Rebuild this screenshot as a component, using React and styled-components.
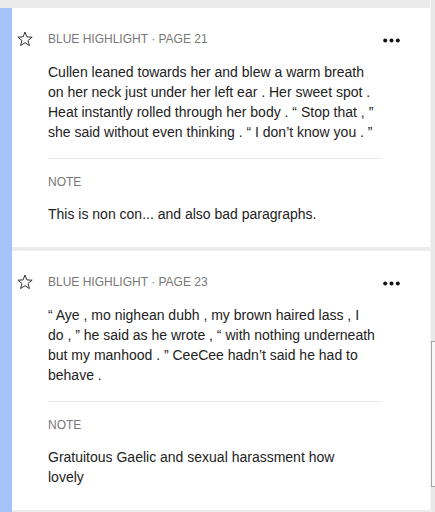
import React from 'react'
import styled, { createGlobalStyle } from 'styled-components'

const highlights = [
    {
        page: 21,
        text: 'Cullen leaned towards her and blew a warm breath on her neck just under her left ear . Her sweet spot . Heat instantly rolled through her body . \u201C Stop that , \u201D she said without even thinking . \u201C I don\u2019t know you . \u201D',
        note: 'This is non con... and also bad paragraphs.'
    },
    {
        page: 23,
        text: '\u201C Aye , mo nighean dubh , my brown haired lass , I do , \u201D he said as he wrote , \u201C with nothing underneath but my manhood . \u201D CeeCee hadn\u2019t said he had to behave .',
        note: 'Gratuitous Gaelic and sexual harassment how lovely'
    }
]

const StarIcon = () => (
    <svg width="16" height="16" viewBox="0 0 16 16">
        <polygon
            points="8,1 9.88,5.91 15.13,6.18 11.04,9.49 12.41,14.57 8,11.7 3.59,14.57 4.96,9.49 0.87,6.18 6.12,5.91"
            fill="none"
            stroke="#333"
            strokeWidth="1"
            strokeLinejoin="miter"
        />
    </svg>
)

const DotsIcon = () => (
    <svg width="17" height="5" viewBox="0 0 17 5">
        <circle cx="2.2" cy="2.5" r="2" fill="#111" />
        <circle cx="8.5" cy="2.5" r="2" fill="#111" />
        <circle cx="14.8" cy="2.5" r="2" fill="#111" />
    </svg>
)

class App extends React.Component {
    render() {
        return (
            <Page>
                <GlobalStyle />
                <List>
                    {highlights.map((h) => (
                        <Card key={h.page}>
                            <Panel>
                                <StarCell><StarIcon /></StarCell>
                                <Heading>Blue highlight · Page {h.page}</Heading>
                                <MenuCell><DotsIcon /></MenuCell>
                                <Quote>{h.text}</Quote>
                                <Divider />
                                <NoteLabel>Note</NoteLabel>
                                <NoteText>{h.note}</NoteText>
                            </Panel>
                        </Card>
                    ))}
                </List>
                <Track>
                    <Thumb />
                </Track>
            </Page>
        )
    }
}

const GlobalStyle = createGlobalStyle`
html, body {
  margin: 0;
  padding: 0;
  background: #ebebeb;
}
body {
  font-family: "Liberation Sans", Arial, sans-serif;
}
`

const Page = styled.div`
display: flex;
width: 435px;
height: 512px;
overflow: hidden;
background: #ebebeb;
`

const List = styled.div`
width: 430px;
flex-shrink: 0;
padding-top: 8px;
display: flex;
flex-direction: column;
`

const Card = styled.div`
display: flex;
border-left: 12px solid #a4c3fb;
padding-bottom: 4px;
`

const Panel = styled.div`
flex: 1;
background: #fff;
display: grid;
grid-template-columns: 36px 334px 1fr;
align-content: start;
padding: 18px 0 23px 0;
`

const StarCell = styled.div`
grid-column: 1;
height: 26px;
padding-left: 5px;
display: flex;
align-items: center;
`

const Heading = styled.div`
grid-column: 2;
height: 26px;
line-height: 26px;
font-size: 12px;
color: #777;
text-transform: uppercase;
`

const MenuCell = styled.div`
grid-column: 3;
height: 26px;
padding-top: 3px;
box-sizing: border-box;
display: flex;
align-items: center;
padding-left: 1px;
`

const Quote = styled.p`
grid-column: 2;
max-width: 328px;
margin: 10px 0 0;
font-size: 14px;
line-height: 20px;
color: #222;
`

const Divider = styled.div`
grid-column: 2;
margin-top: 16px;
border-top: 1px solid #e9e9e9;
`

const NoteLabel = styled.div`
grid-column: 2;
margin-top: 15px;
font-size: 12px;
line-height: 16px;
color: #777;
text-transform: uppercase;
`

const NoteText = styled.p`
grid-column: 2;
max-width: 310px;
margin: 14px 0 0;
font-size: 14px;
line-height: 20px;
color: #222;
`

const Track = styled.div`
flex: 1;
background: #e9e9e9;
border-left: 1px solid #f4f4f4;
`

const Thumb = styled.div`
margin-top: 341px;
height: 144px;
background: #f7f7f7;
border: 1px solid #a5a5a5;
border-right: none;
`

export default App
